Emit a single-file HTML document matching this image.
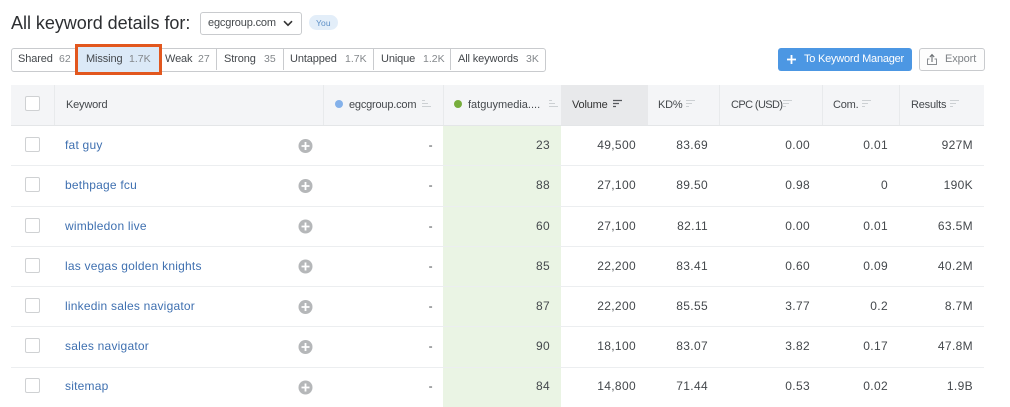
<!DOCTYPE html>
<html><head><meta charset="utf-8">
<style>
html,body{margin:0;padding:0;background:#fff}
#p{position:relative;width:1010px;height:407px;overflow:hidden;background:#fff;font-family:"Liberation Sans",sans-serif;color:#3f4347;font-size:12px;letter-spacing:.22px;filter:blur(.25px)}
#p div,#p span.a,#p svg{position:absolute}
.t{white-space:nowrap;line-height:14px}
.r{white-space:nowrap;line-height:14px;text-align:right;width:80px;color:#44484c;letter-spacing:.35px}
.k{white-space:nowrap;line-height:14px;left:65px;color:#3f70b0}
.cb{left:25px;width:13px;height:13px;border:1px solid #cfd1d3;border-radius:2px;background:#fff}
.ln{left:11px;width:973px;height:1px;background:#eceef0}
.tab{top:49px;height:21px;line-height:21px;white-space:nowrap;font-size:11px;color:#44484c;letter-spacing:-.12px}
.n{color:#83878b;letter-spacing:0;font-size:10.5px}
.sep{top:49px;width:1px;height:21px;background:#c9cbce}
.hs{top:85px;width:1px;height:40px;background:#e8eaec}
.h{top:98px;font-size:11px;line-height:14px;white-space:nowrap;color:#44484c;letter-spacing:-.2px}
</style></head><body><div id="p">

<div class="t" style="left:11px;top:13px;font-size:18px;line-height:20px;color:#2d2f32;letter-spacing:-.03px">All keyword details for:</div>
<div style="left:200px;top:12px;width:100px;height:21px;border:1px solid #c9cbce;border-radius:3px"></div>
<div class="t" style="left:208px;top:16px;font-size:11px;color:#44484c;letter-spacing:-.15px">egcgroup.com</div>
<svg style="left:283px;top:20px" width="10" height="7" viewBox="0 0 10 7"><path d="M1 1.2 5 5.2 9 1.2" fill="none" stroke="#333" stroke-width="1.6"/></svg>
<div style="left:309px;top:15px;width:29px;height:15px;border-radius:8px;background:#e3eef9"></div>
<div class="t" style="left:316px;top:16px;font-size:8.5px;color:#5d8fc6;letter-spacing:.1px">You</div>

<div style="left:11px;top:48px;width:533px;height:22px;border:1px solid #c9cbce;border-radius:3px"></div>
<div class="sep" style="left:216px"></div><div class="sep" style="left:283px"></div><div class="sep" style="left:373px"></div><div class="sep" style="left:450px"></div>
<div class="tab" style="left:18px">Shared</div><div class="tab n" style="left:59px">62</div>
<div style="left:75px;top:44px;width:87px;height:31px;box-sizing:border-box;border:3px solid #e2571e;background:#dbe9f7"></div>
<div class="tab" style="left:86px">Missing</div><div class="tab n" style="left:129px">1.7K</div>
<div class="tab" style="left:165px">Weak</div><div class="tab n" style="left:198px">27</div>
<div class="tab" style="left:224px">Strong</div><div class="tab n" style="left:264px">35</div>
<div class="tab" style="left:290px">Untapped</div><div class="tab n" style="left:345px">1.7K</div>
<div class="tab" style="left:381px">Unique</div><div class="tab n" style="left:423px">1.2K</div>
<div class="tab" style="left:458px">All keywords</div><div class="tab n" style="left:526px">3K</div>

<div style="left:778px;top:48px;width:134px;height:23px;border-radius:3px;background:#4c97e3"></div>
<svg style="left:786px;top:54px" width="11" height="11" viewBox="0 0 11 11"><path d="M5.5 1v9M1 5.5h9" stroke="#fff" stroke-width="1.8"/></svg>
<div class="t" style="left:804px;top:52px;font-size:11px;color:#fff;letter-spacing:-.22px">To Keyword Manager</div>
<div style="left:919px;top:48px;width:64px;height:21px;border:1px solid #c9cbce;border-radius:3px;background:#fdfdfd"></div>
<svg style="left:926px;top:53px" width="12" height="13" viewBox="0 0 12 13"><path d="M6 9V2M3.8 4 6 1.6 8.2 4" fill="none" stroke="#6b6f73" stroke-width="1.1"/><path d="M3.5 6H1.500v5.500h9V6H8.500" fill="none" stroke="#8a8e92" stroke-width="1"/></svg>
<div class="t" style="left:945px;top:52px;font-size:11px;color:#7f8387;letter-spacing:-.1px">Export</div>

<div style="left:11px;top:85px;width:973px;height:40px;background:#f4f5f7"></div>
<div style="left:561px;top:85px;width:87px;height:40px;background:#e8e9eb"></div>
<div class="ln" style="top:125px;background:#e4e6e8"></div>
<div class="hs" style="left:54px"></div><div class="hs" style="left:323px"></div><div class="hs" style="left:443px"></div><div class="hs" style="left:719px"></div><div class="hs" style="left:822px"></div><div class="hs" style="left:899px"></div>
<div class="cb" style="top:96px"></div>
<div class="h" style="left:66px">Keyword</div>
<div style="left:335px;top:100px;width:8px;height:8px;border-radius:50%;background:#84b1ea"></div>
<div class="h" style="left:349px">egcgroup.com</div>
<div style="left:454px;top:100px;width:8px;height:8px;border-radius:50%;background:#77ad3c"></div>
<div class="h" style="left:468px;letter-spacing:0">fatguymedia....</div>
<div class="h" style="left:572px;color:#333">Volume</div>
<div class="h" style="left:658px">KD%</div>
<div class="h" style="left:731px;letter-spacing:-.6px">CPC (USD)</div>
<div class="h" style="left:833px">Com.</div>
<div class="h" style="left:911px">Results</div>

<svg style="left:0;top:0" width="1010" height="407" viewBox="0 0 1010 407" fill="none">
<g stroke="#ccd0d3" stroke-width="1">
<path d="M422 100.500h3M422 103.500h6M422 106.500h9"/>
<path d="M549 100.500h3M549 103.500h6M549 106.500h9"/>
<path d="M686 100.500h9M686 103.500h6M686 106.500h3"/>
<path d="M783 100.500h9M783 103.500h6M783 106.500h3"/>
<path d="M862 100.500h9M862 103.500h6M862 106.500h3"/>
<path d="M950 100.500h9M950 103.500h6M950 106.500h3"/>
</g>
<path d="M613 100.500h9M613 103.500h6M613 106.500h3" stroke="#55595d" stroke-width="1.2"/>
</svg>

<div style="left:443px;top:126px;width:118px;height:281px;background:#eaf4e4"></div>

<div class="ln" style="top:165px"></div><div class="ln" style="top:206px"></div><div class="ln" style="top:246px"></div><div class="ln" style="top:286px"></div><div class="ln" style="top:326px"></div><div class="ln" style="top:367px"></div>

<div class="cb" style="top:137px"></div><div class="cb" style="top:177px"></div><div class="cb" style="top:218px"></div><div class="cb" style="top:258px"></div><div class="cb" style="top:298px"></div><div class="cb" style="top:338px"></div><div class="cb" style="top:378px"></div>

<div class="k" style="top:138px">fat guy</div>
<div class="k" style="top:178px">bethpage fcu</div>
<div class="k" style="top:219px">wimbledon live</div>
<div class="k" style="top:259px">las vegas golden knights</div>
<div class="k" style="top:299px">linkedin sales navigator</div>
<div class="k" style="top:339px">sales navigator</div>
<div class="k" style="top:379px">sitemap</div>

<svg style="left:0;top:0" width="1010" height="407" viewBox="0 0 1010 407">
<g fill="#b5b7b9">
<circle cx="305.500" cy="146" r="7"/><circle cx="305.500" cy="186" r="7"/><circle cx="305.500" cy="226.500" r="7"/><circle cx="305.500" cy="266.500" r="7"/><circle cx="305.500" cy="307" r="7"/><circle cx="305.500" cy="347" r="7"/><circle cx="305.500" cy="387.500" r="7"/>
</g>
<g stroke="#fff" stroke-width="1.800">
<path d="M305.500 142v8M301.500 146h8M305.500 182v8M301.500 186h8M305.500 222.500v8M301.500 226.500h8M305.500 262.500v8M301.500 266.500h8M305.500 303v8M301.500 307h8M305.500 343v8M301.500 347h8M305.500 383.500v8M301.500 387.500h8"/>
</g>
</svg>

<div class="r" style="left:353px;top:138px">-</div><div class="r" style="left:470px;top:138px">23</div><div class="r" style="left:556px;top:138px">49,500</div><div class="r" style="left:628px;top:138px">83.69</div><div class="r" style="left:730px;top:138px">0.00</div><div class="r" style="left:808px;top:138px">0.01</div><div class="r" style="left:893px;top:138px">927M</div>
<div class="r" style="left:353px;top:178px">-</div><div class="r" style="left:470px;top:178px">88</div><div class="r" style="left:556px;top:178px">27,100</div><div class="r" style="left:628px;top:178px">89.50</div><div class="r" style="left:730px;top:178px">0.98</div><div class="r" style="left:808px;top:178px">0</div><div class="r" style="left:893px;top:178px">190K</div>
<div class="r" style="left:353px;top:219px">-</div><div class="r" style="left:470px;top:219px">60</div><div class="r" style="left:556px;top:219px">27,100</div><div class="r" style="left:628px;top:219px">82.11</div><div class="r" style="left:730px;top:219px">0.00</div><div class="r" style="left:808px;top:219px">0.01</div><div class="r" style="left:893px;top:219px">63.5M</div>
<div class="r" style="left:353px;top:259px">-</div><div class="r" style="left:470px;top:259px">85</div><div class="r" style="left:556px;top:259px">22,200</div><div class="r" style="left:628px;top:259px">83.41</div><div class="r" style="left:730px;top:259px">0.60</div><div class="r" style="left:808px;top:259px">0.09</div><div class="r" style="left:893px;top:259px">40.2M</div>
<div class="r" style="left:353px;top:299px">-</div><div class="r" style="left:470px;top:299px">87</div><div class="r" style="left:556px;top:299px">22,200</div><div class="r" style="left:628px;top:299px">85.55</div><div class="r" style="left:730px;top:299px">3.77</div><div class="r" style="left:808px;top:299px">0.2</div><div class="r" style="left:893px;top:299px">8.7M</div>
<div class="r" style="left:353px;top:339px">-</div><div class="r" style="left:470px;top:339px">90</div><div class="r" style="left:556px;top:339px">18,100</div><div class="r" style="left:628px;top:339px">83.07</div><div class="r" style="left:730px;top:339px">3.82</div><div class="r" style="left:808px;top:339px">0.17</div><div class="r" style="left:893px;top:339px">47.8M</div>
<div class="r" style="left:353px;top:379px">-</div><div class="r" style="left:470px;top:379px">84</div><div class="r" style="left:556px;top:379px">14,800</div><div class="r" style="left:628px;top:379px">71.44</div><div class="r" style="left:730px;top:379px">0.53</div><div class="r" style="left:808px;top:379px">0.02</div><div class="r" style="left:893px;top:379px">1.9B</div>

</div></body></html>
